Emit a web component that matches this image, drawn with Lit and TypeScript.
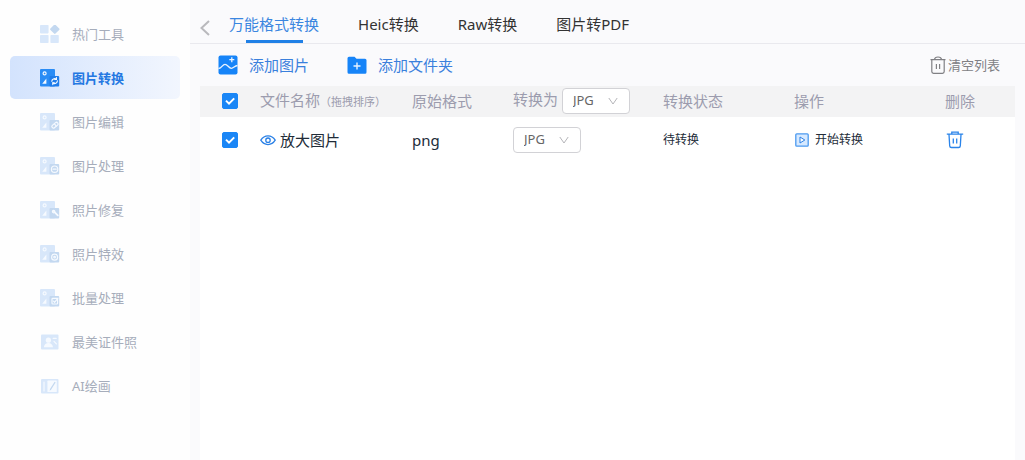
import { LitElement, html, css, svg, nothing } from "lit";
import { customElement, property, state } from "lit/decorators.js";
import { classMap } from "lit/directives/class-map.js";

const FORMATS = ["JPG", "PNG", "BMP", "WEBP", "GIF"];
const TABS = ["万能格式转换", "Heic转换", "Raw转换", "图片转PDF"];
const MENU = [
  { id: "hot", label: "热门工具" },
  { id: "convert", label: "图片转换" },
  { id: "edit", label: "图片编辑" },
  { id: "process", label: "图片处理" },
  { id: "repair", label: "照片修复" },
  { id: "effect", label: "照片特效" },
  { id: "batch", label: "批量处理" },
  { id: "idphoto", label: "最美证件照" },
  { id: "ai", label: "AI绘画" },
];

/* Small badge glyphs shown in the lower right corner of the photo icons. */
const badge: Record<string, unknown> = {
  convert: svg`<path d="M11.800 12.200a2.800 2.800 0 0 1 4.400-2M17.400 11.800a2.800 2.800 0 0 1-4.400 2.200" /><path d="M16.400 8.600v1.800h-1.600M12.800 15.600v-1.800h1.600" />`,
  edit: svg`<rect x="11.400" y="10.600" width="7" height="3.200" rx="1.400" transform="rotate(-40 15 12.100)" /><path d="M14.400 10.900l1.900 2.200" />`,
  process: svg`<circle cx="14.600" cy="12.200" r="3.200" /><path d="M13 12.200h3.200" />`,
  repair: svg`<path d="M14 10.600l3.800 3.800" stroke-width="1.800" /><circle cx="13.600" cy="10.600" r="1.200" />`,
  effect: svg`<circle cx="14.600" cy="12.200" r="3" /><circle cx="14.600" cy="12.200" r=".8" />`,
  batch: svg`<rect x="12" y="9.400" width="5.600" height="5.600" rx=".8" /><path d="M13.600 12.200l1 1.200 3.400-4.200" />`,
};

@customElement("menu-icon")
class MenuIcon extends LitElement {
  @property() name = "";
  @property({ type: Boolean }) active = false;

  static styles = css`
    :host { display: block; width: 20px; height: 18px; }
    svg { display: block; width: 20px; height: 18px; }
    .base { fill: #d8e7fa; }
    .over { fill: #c3d8f0; }
    .glyph { fill: none; stroke: #f6faff; stroke-width: 1.2; stroke-linecap: round; }
    .solid { fill: #f6faff; }
    .on .base { fill: #2a8cf5; }
    .on .over { fill: #1f7cea; }
  `;

  private shape() {
    if (this.name === "hot") {
      return svg`<g>
        <rect class="base" x="0" y="0" width="8.600" height="8.400" rx=".8" />
        <rect class="base" x="0" y="10" width="8.600" height="8" rx=".8" />
        <rect class="base" x="10.400" y="10" width="8.400" height="8" rx=".8" />
        <rect class="over" x="11.200" y=".6" width="7.200" height="7.200" rx="1" transform="rotate(45 14.800 4.200)" />
      </g>`;
    }
    if (this.name === "idphoto") {
      return svg`<g>
        <rect class="base" x="1" y="1.600" width="17.500" height="15" rx="1" />
        <circle class="solid" cx="8.400" cy="7.200" r="2.600" />
        <path class="solid" d="M3.800 14.200c.5-3 2.400-4.200 4.600-4.200s4.100 1.200 4.600 4.200z" />
        <path class="glyph" d="M13.200 5.400h3M14 8.400l2.400 2.400" />
      </g>`;
    }
    if (this.name === "ai") {
      return svg`<g>
        <rect class="base" x="1" y="2" width="17.500" height="14.600" rx="1" />
        <rect class="solid" x="7.400" y="3.600" width="9.400" height="11.400" rx=".6" />
        <path class="over" d="M14.600 4.800l1 .8-4.400 7-1.500 1.200.3-1.900z" />
        <path class="glyph" d="M4 5v9" />
      </g>`;
    }
    return svg`<g>
      <rect class="base" x="0" y="0" width="15" height="17.500" rx="1" />
      <circle class="glyph" cx="4.600" cy="4.400" r="1.500" />
      <path class="solid" d="M2.200 14.800l4.200-5.400v5.400z" />
      <rect class="over" x="9.500" y="7" width="9.700" height="10.500" rx="1" />
      <g class="glyph">${badge[this.name] ?? nothing}</g>
    </g>`;
  }

  render() {
    return html`<svg viewBox="0 0 20 18" class=${this.active ? "on" : ""} aria-hidden="true">${this.shape()}</svg>`;
  }
}

@customElement("check-box")
class CheckBox extends LitElement {
  @property() label = "";
  @property({ type: Boolean }) checked = false;

  static styles = css`
    :host { display: block; }
    label { display: grid; width: 16px; height: 16px; }
    input, svg { grid-area: 1 / 1; width: 16px; height: 16px; margin: 0; }
    input { appearance: none; border: 1px solid #b9c0cc; border-radius: 2px; background: #fff; }
    input:checked { border-color: #1a86f6; background: #1a86f6; }
    svg { pointer-events: none; fill: none; stroke: #fff; stroke-width: 2; }
  `;

  render() {
    return html`<label>
      <input type="checkbox" aria-label=${this.label} .checked=${this.checked}
        @change=${(e: Event) => (this.checked = (e.target as HTMLInputElement).checked)} />
      <svg viewBox="0 0 16 16" aria-hidden="true"><path d="M4 7.600l3 3 5.200-5.200" /></svg>
    </label>`;
  }
}

@customElement("format-select")
class FormatSelect extends LitElement {
  @property() label = "";

  static styles = css`
    :host { display: inline-block; vertical-align: middle; }
    label { display: grid; align-items: center; }
    select {
      grid-area: 1 / 1;
      appearance: none;
      box-sizing: border-box;
      width: 68px;
      height: 26px;
      margin: 0;
      padding: 0 24px 2px 10px;
      border: 1px solid #d2d2d6;
      border-radius: 4px;
      background: #fff;
      color: #666;
      font: 13px "Noto Sans", "Noto Sans CJK SC", sans-serif;
    }
    svg { grid-area: 1 / 1; justify-self: end; width: 10px; height: 8px; margin-right: 12px; fill: none; stroke: #b4b4b8; pointer-events: none; }
  `;

  render() {
    return html`<label>
      <select aria-label=${this.label}>${FORMATS.map((f) => html`<option>${f}</option>`)}</select>
      <svg viewBox="0 0 10 8" aria-hidden="true"><path d="M.8 1L5 7l4.200-6" /></svg>
    </label>`;
  }
}

@customElement("app-root")
class AppRoot extends LitElement {
  @state() private menu = "convert";
  @state() private tab = 0;

  static styles = css`
    :host {
      display: flex;
      min-height: 100vh;
      background: #fafafc;
      color: #333;
      font: 15px/20px "Noto Sans", "Noto Sans CJK SC", sans-serif;
    }
    button { display: flex; align-items: center; margin: 0; padding: 0; border: 0; background: none; color: inherit; font: inherit; cursor: pointer; white-space: nowrap; }
    svg { display: block; flex: none; }

    .side { flex: none; box-sizing: border-box; width: 190px; padding: 12px 10px; background: #fefefe; }
    .menu { display: grid; gap: 1px; margin: 0; padding: 0; list-style: none; }
    .item { width: 100%; height: 43px; gap: 12px; padding-left: 30px; border-radius: 5px; color: #a6adbb; font-size: 13px; }
    .item.active { background: linear-gradient(90deg, #d3e3fd, #f2f6fe); color: #2478e2; font-weight: 700; }

    .main { flex: 1; min-width: 0; display: flex; flex-direction: column; }
    .tabs { display: flex; align-items: flex-end; height: 43px; padding-left: 10px; border-bottom: 1px solid #e9e9ee; }
    .back { height: 30px; margin-right: 19px; }
    .back svg { width: 10px; height: 16px; fill: none; stroke: #b9b9bd; stroke-width: 2; }
    .tablist { display: flex; gap: 39px; }
    .tab { flex-direction: column; gap: 6px; }
    .tab::after { content: ""; width: 57px; height: 3px; }
    .tab.active { color: #3a86e0; }
    .tab.active::after { background: #2080e6; }

    .tools { display: flex; align-items: center; gap: 38px; height: 42px; padding: 0 25px 0 28px; color: #3a80dc; }
    .tool { gap: 11px; }
    .tool svg { width: 20px; height: 20px; }
    .clear { gap: 2px; margin-left: auto; color: #808084; font-size: 13px; }
    .clear svg { width: 16px; height: 18px; fill: none; stroke: currentColor; }

    .sheet { flex: 1; margin: 0 10px; background: #fff; }
    table { width: 100%; table-layout: fixed; border-collapse: collapse; }
    th, td { padding: 0; text-align: left; font-weight: 400; white-space: nowrap; }
    th { padding-bottom: 1px; }
    thead tr { height: 31px; background: #f3f3f4; color: #9c9cae; }
    tbody tr { height: 46px; color: #222c38; }
    .c-check { width: 60px; }
    .c-name { width: 152px; }
    .c-from { width: 101px; }
    .c-to { width: 150px; }
    .c-state { width: 131px; }
    .c-act { width: 151px; }
    .c-del { width: 70px; }
    .check { padding-left: 22px; }
    .hint { font-size: 11px; }
    .name { display: flex; align-items: center; gap: 4px; }
    .eye { width: 16px; height: 12px; fill: none; stroke: #2a80e6; stroke-width: 1.3; }
    .small { font-size: 12px; }
    .start { gap: 6px; }
    .start svg { width: 15px; height: 14px; }
    .bin { width: 20px; height: 18px; fill: none; stroke: #2a84ea; stroke-width: 1.3; }
  `;

  render() {
    return html`
      <nav class="side">
        <ul class="menu">
          ${MENU.map((m) => html`<li>
            <button class=${classMap({ item: true, active: m.id === this.menu })} @click=${() => (this.menu = m.id)}>
              <menu-icon name=${m.id} ?active=${m.id === this.menu}></menu-icon><span>${m.label}</span>
            </button>
          </li>`)}
        </ul>
      </nav>
      <main class="main">
        <header class="tabs">
          <button class="back" aria-label="返回">
            <svg viewBox="0 0 10 16"><path d="M9 1L1.500 8 9 15" /></svg>
          </button>
          <div class="tablist" role="tablist">
            ${TABS.map((t, i) => html`<button role="tab" aria-selected=${i === this.tab}
              class=${classMap({ tab: true, active: i === this.tab })} @click=${() => (this.tab = i)}>${t}</button>`)}
          </div>
        </header>
        <div class="tools">
          <button class="tool">
            <svg viewBox="0 0 20 20">
              <rect x=".5" y=".5" width="19" height="19" rx="2" fill="#1684f8" />
              <path d="M.5 13.500c3.500 0 3.800-4.200 6.500-4.200s3.600 4 6.400 4c2.400 0 3-2.600 6.100-2.800M13.800 2.200v5M11.300 4.700h5" fill="none" stroke="#e8f3ff" stroke-width="1.300" />
            </svg>
            添加图片
          </button>
          <button class="tool">
            <svg viewBox="0 0 20 20">
              <path d="M2 1.800h5.500l2 2H18a1.500 1.500 0 0 1 1.500 1.500v12a1.500 1.500 0 0 1-1.500 1.500H2a1.500 1.500 0 0 1-1.500-1.500v-14A1.500 1.500 0 0 1 2 1.800z" fill="#1684f8" />
              <path d="M10 7.500v7M6.500 11h7" stroke="#e8f3ff" stroke-width="1.400" />
            </svg>
            添加文件夹
          </button>
          <button class="clear">
            <svg viewBox="0 0 16 18"><path d="M.5 3.600h15M4.500 3.400c.3-3.200 6.700-3.200 7 0M1.800 3.600v12a1.700 1.700 0 0 0 1.700 1.700h9a1.700 1.700 0 0 0 1.700-1.700v-12M6.400 8v5M9.600 8v5" stroke-width="1.200" /></svg>
            清空列表
          </button>
        </div>
        <section class="sheet">
          <table>
            <colgroup>
              <col class="c-check" /><col class="c-name" /><col class="c-from" /><col class="c-to" />
              <col class="c-state" /><col class="c-act" /><col class="c-del" />
            </colgroup>
            <thead>
              <tr>
                <th class="check"><check-box label="全选" checked></check-box></th>
                <th>文件名称<span class="hint">（拖拽排序）</span></th>
                <th>原始格式</th>
                <th>转换为 <format-select label="转换为"></format-select></th>
                <th>转换状态</th>
                <th>操作</th>
                <th>删除</th>
              </tr>
            </thead>
            <tbody>
              <tr>
                <td class="check"><check-box label="选择 放大图片" checked></check-box></td>
                <td>
                  <div class="name">
                    <svg class="eye" viewBox="0 0 16 12" aria-hidden="true"><path d="M.8 6.200C4.400.4 11.600.4 15.200 6.200 11.600 12 4.400 12 .8 6.200z" /><circle cx="8" cy="6.200" r="2.200" /></svg>
                    放大图片
                  </div>
                </td>
                <td>png</td>
                <td><format-select label="放大图片 转换为"></format-select></td>
                <td class="small">待转换</td>
                <td class="small">
                  <button class="start">
                    <svg viewBox="0 0 15 14"><rect x="1.800" y=".8" width="12.400" height="12.400" rx="1" fill="#d6e9ff" stroke="#4c9af0" stroke-width="1.300" /><path d="M6 4l4.800 3L6 10z" fill="#fff" stroke="#2a80e6" /></svg>
                    开始转换
                  </button>
                </td>
                <td>
                  <button aria-label="删除">
                    <svg class="bin" viewBox="0 0 20 18"><path d="M1.800 3.200h16.400M6.800 3V1.200h6.400V3M4 3.400l.7 11.500a1.700 1.700 0 0 0 1.700 1.600h7.200a1.700 1.700 0 0 0 1.700-1.600L16 3.400M8.300 7.500v5M11.700 7.500v5" /></svg>
                  </button>
                </td>
              </tr>
            </tbody>
          </table>
        </section>
      </main>
    `;
  }
}
